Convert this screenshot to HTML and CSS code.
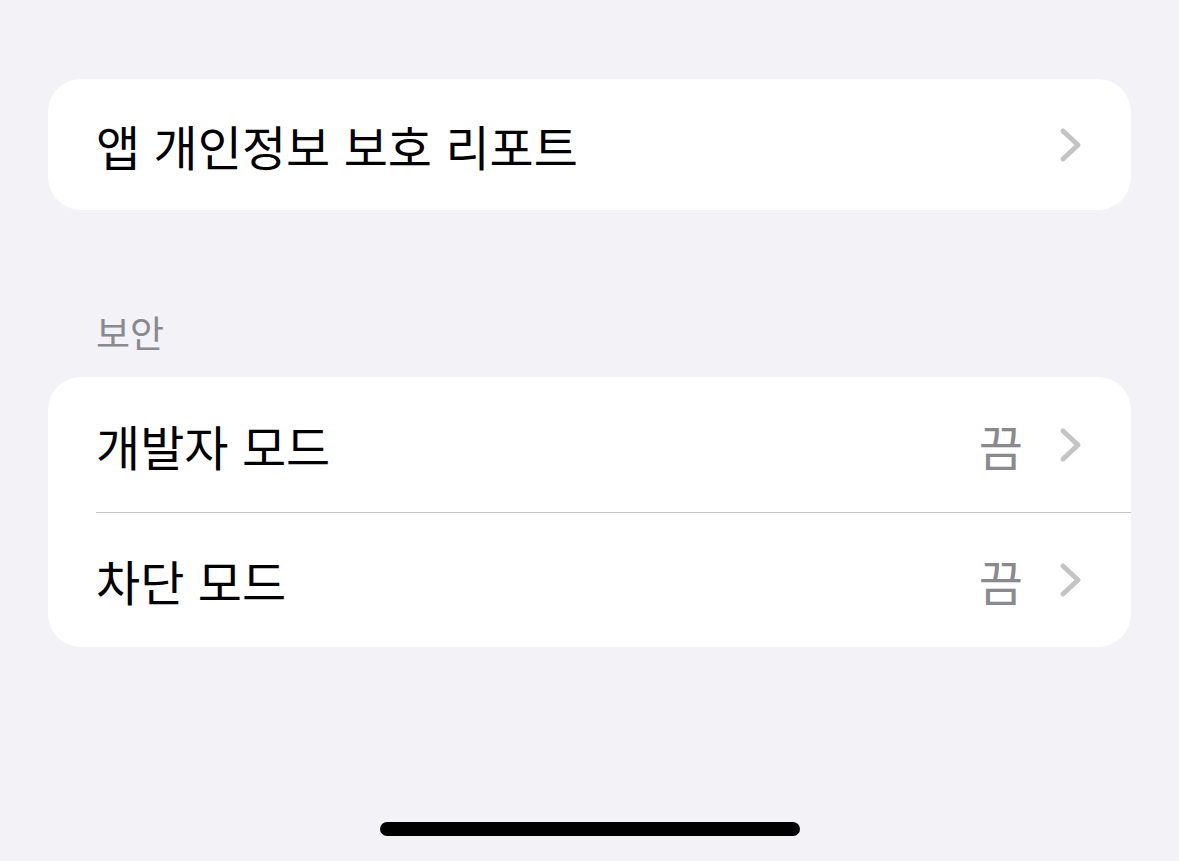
FILE: index.html
```html
<!DOCTYPE html>
<html lang="ko">
<head>
    <meta charset="UTF-8">
    <meta name="viewport" content="width=device-width, initial-scale=1.0">
    <title>개인정보 보호 및 보안</title>
    <link rel="stylesheet" href="styles.css">
</head>
<body>
    <main class="settings">
        <section class="group">
            <div class="row">
                <span class="label">앱 개인정보 보호 리포트</span>
                <svg class="chevron" viewBox="0 0 24 36"><path d="M4 4 L19 18 L4 32"/></svg>
            </div>
        </section>

        <h3 class="group-title">보안</h3>
        <section class="group">
            <div class="row">
                <span class="label">개발자 모드</span>
                <span class="value">끔</span>
                <svg class="chevron" viewBox="0 0 24 36"><path d="M4 4 L19 18 L4 32"/></svg>
            </div>
            <div class="row">
                <span class="label">차단 모드</span>
                <span class="value">끔</span>
                <svg class="chevron" viewBox="0 0 24 36"><path d="M4 4 L19 18 L4 32"/></svg>
            </div>
        </section>
    </main>

    <div class="home-indicator"></div>
</body>
</html>
```

FILE: styles.css
```css
* {
    margin: 0;
    padding: 0;
    box-sizing: border-box;
}

body {
    font-family: "Noto Sans CJK KR", "Noto Sans", sans-serif;
    background: #f2f2f7;
    color: #000;
    width: 1179px;
    height: 861px;
    overflow: hidden;
    position: relative;
}

.settings {
    padding: 79px 48px 0 48px;
}

.group {
    background: #fff;
    border-radius: 33px;
    overflow: hidden;
}

.row {
    display: flex;
    align-items: center;
    height: 135px;
    margin-left: 48px;
    padding-right: 48px;
}

.group:first-child .row {
    height: 131px;
}

.row + .row {
    border-top: 1px solid #c6c6c8;
}

.label {
    flex: 1;
    font-size: 48px;
    line-height: 1;
}

.value {
    font-size: 48px;
    line-height: 1;
    color: #8a8a8e;
    margin-right: 36px;
}

.chevron {
    width: 24px;
    height: 36px;
    fill: none;
    stroke: #c4c4c7;
    stroke-width: 5;
    stroke-linecap: round;
    stroke-linejoin: round;
}

.group-title {
    font-size: 37px;
    font-weight: normal;
    color: #8a8a8e;
    line-height: 1;
    padding: 104px 0 0 48px;
    height: 167px;
}

.home-indicator {
    position: absolute;
    left: 380px;
    top: 822px;
    width: 420px;
    height: 14px;
    border-radius: 7px;
    background: #000;
}
```
